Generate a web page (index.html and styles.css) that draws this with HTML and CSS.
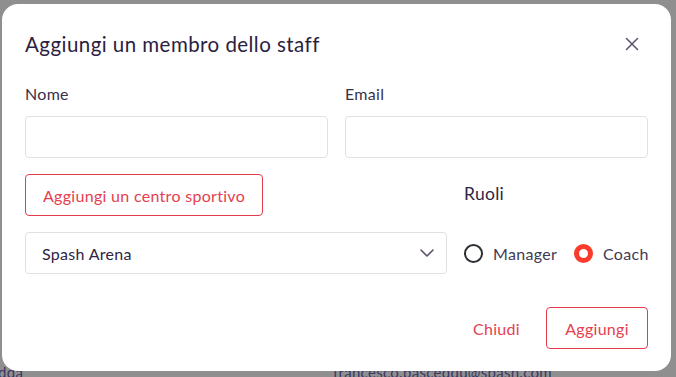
FILE: index.html
```html
<!DOCTYPE html>
<html lang="it">
<head>
<meta charset="utf-8">
<link rel="stylesheet" href="styles.css">
</head>
<body>
<div class="backdrop">
  <div class="behind">
    <span class="behind-left">dda</span>
    <span class="behind-mail">francesco.pasceddu@spash.com</span>
  </div>
  <div class="modal">
    <div class="header">
      <h1 class="title">Aggiungi un membro dello staff</h1>
      <button class="close" aria-label="Chiudi">
        <svg width="14" height="14" viewBox="0 0 14 14"><path d="M1.5 1.5 L12.5 12.5 M12.5 1.5 L1.5 12.5" stroke="#5b5169" stroke-width="1.5" fill="none" stroke-linecap="round"/></svg>
      </button>
    </div>
    <div class="fields">
      <div class="field">
        <label class="label">Nome</label>
        <div class="input"></div>
      </div>
      <div class="field">
        <label class="label">Email</label>
        <div class="input"></div>
      </div>
    </div>
    <div class="row2">
      <div class="left">
        <button class="btn-outline wide">Aggiungi un centro sportivo</button>
        <div class="select">
          <span>Spash Arena</span>
          <svg width="16" height="10" viewBox="0 0 16 10"><path d="M2 2 L8 8 L14 2" stroke="#5b5169" stroke-width="1.6" fill="none" stroke-linecap="round" stroke-linejoin="round"/></svg>
        </div>
      </div>
      <div class="right">
        <div class="roles-title">Ruoli</div>
        <div class="radios">
          <div class="radio"><span class="dot"></span>Manager</div>
          <div class="radio"><span class="dot on"></span>Coach</div>
        </div>
      </div>
    </div>
    <div class="footer">
      <button class="btn-text">Chiudi</button>
      <button class="btn-outline">Aggiungi</button>
    </div>
  </div>
</div>
</body>
</html>
```

FILE: styles.css
```css
* { box-sizing: border-box; }
html, body { margin: 0; padding: 0; }
body {
  width: 676px;
  height: 377px;
  overflow: hidden;
  font-family: Lato, "Open Sans", sans-serif;
  color: #2f2544;
  letter-spacing: 0.3px;
}
.backdrop {
  position: relative;
  width: 676px;
  height: 377px;
  background: #8f8f8f;
  padding: 4px 5px 0 2px;
}
.behind {
  position: absolute;
  left: 0;
  top: 363px;
  width: 676px;
  font-size: 15px;
  color: #3c3763;
}
.behind-left { position: absolute; left: -2px; top: 0; }
.behind-mail { position: absolute; left: 333px; top: 0; }
.modal {
  position: relative;
  width: 669px;
  height: 367px;
  background: #fff;
  border-radius: 16px;
  padding: 0 23px 0 23px;
}
.header {
  display: flex;
  justify-content: space-between;
  align-items: center;
  height: 80px;
}
.title {
  margin: 0;
  font-size: 20.5px;
  font-weight: 400;
  letter-spacing: 0.45px;
  color: #2b2140;
}
.close {
  border: 0;
  background: none;
  padding: 0;
  width: 16px;
  height: 16px;
  margin-right: 8px;
  display: flex;
  align-items: center;
  justify-content: center;
}
.fields {
  display: grid;
  grid-template-columns: 303px 303px;
  column-gap: 17px;
}
.field { display: flex; flex-direction: column; }
.label {
  font-size: 16px;
  color: #3a3049;
  height: 32px;
  line-height: 20px;
}
.input {
  height: 42px;
  border: 1px solid #e1e1e4;
  border-radius: 4px;
}
.row2 {
  display: grid;
  grid-template-columns: 422px 184px;
  column-gap: 17px;
  margin-top: 16px;
}
.left { display: flex; flex-direction: column; align-items: flex-start; gap: 16px; }
.btn-outline {
  font-family: inherit;
  font-size: 16px;
  letter-spacing: 0.3px;
  color: #e5404f;
  background: #fff;
  border: 1px solid #e43c4c;
  border-radius: 4px;
  height: 42px;
  padding: 0 17px;
}
.btn-outline.wide { width: 238px; padding: 0; }
.select {
  width: 422px;
  height: 42px;
  border: 1px solid #e1e1e4;
  border-radius: 4px;
  display: flex;
  align-items: center;
  justify-content: space-between;
  padding: 0 11px 0 16px;
  font-size: 16px;
  color: #2f2544;
}
.right { display: flex; flex-direction: column; }
.roles-title {
  font-size: 17.5px;
  color: #2f2544;
  height: 58px;
  padding-top: 9px;
}
.radios { display: flex; align-items: center; gap: 17px; height: 42px; }
.radio {
  display: flex;
  align-items: center;
  gap: 10px;
  font-size: 16px;
  color: #423a55;
}
.dot {
  width: 19px;
  height: 19px;
  border-radius: 50%;
  border: 2px solid #2d2d33;
  flex: none;
}
.dot.on {
  border: 5px solid #fa3b2e;
}
.footer {
  display: flex;
  justify-content: flex-end;
  align-items: center;
  gap: 26px;
  margin-top: 33px;
}
.footer .btn-outline { width: 102px; padding: 0; }
.btn-text {
  font-family: inherit;
  font-size: 16px;
  letter-spacing: 0.3px;
  color: #e5404f;
  background: none;
  border: 0;
  padding: 0;
}
```
